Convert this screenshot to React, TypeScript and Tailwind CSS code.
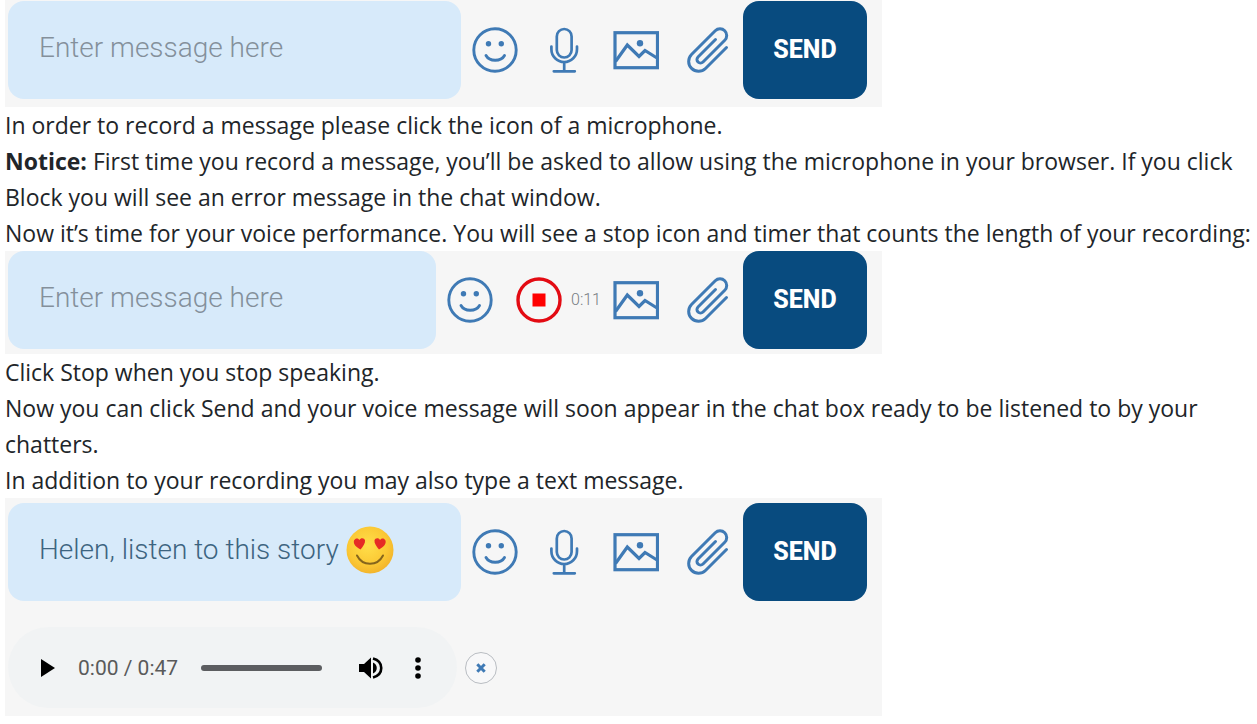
import { useState } from 'react';
import type { ReactNode } from 'react';

function SmileIcon() {
  return (
    <svg viewBox="0 0 46 46" className="size-[46px]" fill="none" stroke="currentColor" strokeWidth="2.9" strokeLinecap="round">
      <circle cx="23" cy="23" r="21.2" />
      <path d="M14 28.500c3.500 6.300 15 6.300 18.500 0" />
      <circle cx="16.500" cy="16.700" r="2.700" fill="currentColor" stroke="none" />
      <circle cx="29.300" cy="16.700" r="2.700" fill="currentColor" stroke="none" />
    </svg>
  );
}

function MicIcon() {
  return (
    <svg viewBox="0 0 46 46" className="size-[46px]" fill="none" stroke="currentColor" strokeWidth="2.7" strokeLinecap="round">
      <rect x="15.800" y="2" width="14.800" height="28.500" rx="7.400" />
      <path d="M10.400 19.500v2.700a12.800 12.800 0 0 0 25.600 0v-2.700M23.200 35v9.300M12.800 44.300h21" />
    </svg>
  );
}

function ImageIcon() {
  return (
    <svg viewBox="0 0 46 46" className="size-[46px]" fill="none" stroke="currentColor" strokeWidth="3.200">
      <rect x="2" y="5.700" width="42.500" height="35" />
      <path d="M2.500 34.500 14.300 18l11.700 11.500L32 23.500l12 7.500" />
      <circle cx="27" cy="16.300" r="3.200" fill="currentColor" stroke="none" />
    </svg>
  );
}

function ClipIcon() {
  return (
    <svg viewBox="0 0 46 46" className="size-[46px]" fill="none" stroke="currentColor" strokeWidth="3" strokeLinecap="round">
      <path d="M41.500 20.500 20.500 41.500A9.900 9.900 0 0 1 6.500 27.500L30.250 3.750a6.700 6.700 0 0 1 9.500 9.500L18 35a3.500 3.500 0 0 1-5-5L30.500 12.500" />
    </svg>
  );
}

function StopIcon() {
  return (
    <svg viewBox="0 0 46 46" className="size-[46px]">
      <circle cx="23" cy="23" r="21" fill="none" stroke="#e30b13" strokeWidth="3.400" />
      <rect x="16.500" y="16.500" width="13" height="13" fill="#ff0000" />
    </svg>
  );
}

function HeartEyes() {
  return (
    <svg viewBox="0 0 48 48" className="size-12 shrink-0" role="img" aria-label="heart eyes">
      <defs>
        <radialGradient id="face" cx="0.45" cy="0.4" r="0.6">
          <stop offset="0" stopColor="#ffdf4a" />
          <stop offset="0.7" stopColor="#fbc834" />
          <stop offset="1" stopColor="#f3b52c" />
        </radialGradient>
      </defs>
      <circle cx="24" cy="24" r="23.500" fill="url(#face)" />
      <path d="M14.500 23.500C10 21 7 18 8 14.500c1.300-2.800 4.500-2.500 5.500-.500 1-2.600 5-2.400 5.500.300.500 3-2 6.200-4.500 9.200Z" fill="#e62b25" />
      <path d="M33 23.500c-2.500-3-5-6.200-4.500-9.200.500-2.700 4.500-2.900 5.500-.300 1-2 4.200-2.300 5.500.500 1 3.500-2 6.500-6.500 9Z" fill="#e62b25" />
      <path d="M11 29.500c5.500 11 20.500 11 26 0" fill="none" stroke="#86651c" strokeWidth="2" strokeLinecap="round" />
    </svg>
  );
}

function IconButton({ label, children }: { label: string; children: ReactNode }) {
  return (
    <button type="button" aria-label={label} className="shrink-0 text-[#3f7ab5]">
      {children}
    </button>
  );
}

interface ComposerProps {
  initial?: string;
  emoji?: boolean;
  timer?: string;
}

function Composer({ initial = '', emoji = false, timer }: ComposerProps) {
  const [message, setMessage] = useState(initial);

  return (
    <form className="flex items-center pl-[3px] pr-[15px]" onSubmit={e => e.preventDefault()}>
      <div className="mr-[11px] flex h-[98px] min-w-0 flex-1 items-center gap-[7px] rounded-2xl bg-[#d7eafa] pb-1 pl-[31px]">
        <input
          type="text"
          aria-label="Message"
          placeholder="Enter message here"
          value={message}
          onChange={e => setMessage(e.target.value)}
          className="[field-sizing:content] min-w-0 bg-transparent text-[28px] leading-9 font-light text-[#3d6480] outline-none placeholder:text-[#84909b]"
        />
        {emoji && <HeartEyes />}
      </div>
      <IconButton label="Emoji"><SmileIcon /></IconButton>
      <div className="ml-[23px] flex items-center">
        {timer ? (
          <>
            <IconButton label="Stop recording"><StopIcon /></IconButton>
            <span className="ml-[9px] mr-[13px] w-[29px] text-base font-light text-[#777c82]">{timer}</span>
          </>
        ) : (
          <div className="mr-[26px] flex">
            <IconButton label="Record"><MicIcon /></IconButton>
          </div>
        )}
      </div>
      <IconButton label="Add image"><ImageIcon /></IconButton>
      <div className="ml-[26px] mr-3 flex">
        <IconButton label="Attach file"><ClipIcon /></IconButton>
      </div>
      <button type="submit" className="h-[98px] w-[124px] shrink-0 rounded-2xl bg-[#084b7f] text-[25px] font-extrabold text-white">
        SEND
      </button>
    </form>
  );
}

function AudioPlayer() {
  return (
    <div className="flex items-center gap-2 pl-[3px]">
      <div className="flex h-[81px] w-[449px] items-center rounded-full bg-[#f1f3f4] pl-[33px]">
        <button type="button" aria-label="Play">
          <svg viewBox="0 0 14 18" className="h-[18px] w-[14px]">
            <path d="M0 0v18L14 9Z" />
          </svg>
        </button>
        <span className="ml-[23px] w-[101px] whitespace-nowrap text-[21px] text-[#5a5a5a]">0:00 / 0:47</span>
        <input
          type="range"
          aria-label="Seek"
          min={0}
          max={47}
          defaultValue={0}
          className="ml-[22px] h-1.5 w-[121px] appearance-none rounded-full bg-[#5c5d60] [&::-webkit-slider-thumb]:size-0 [&::-webkit-slider-thumb]:appearance-none"
        />
        <button type="button" aria-label="Mute" className="ml-[37px]">
          <svg viewBox="0 0 24 24" className="size-6">
            <path d="M0 8v8h5l7 6.500v-21L5 8Z" />
            <path d="M14 6.500v11c5-2 5-9 0-11Z" />
            <path d="M14 2.500c11 3 11 16 0 19" fill="none" stroke="#000" strokeWidth="2.600" />
          </svg>
        </button>
        <button type="button" aria-label="More options" className="ml-8">
          <svg viewBox="0 0 6 22" className="h-[22px] w-1.5">
            <circle cx="3" cy="3" r="2.800" />
            <circle cx="3" cy="11" r="2.800" />
            <circle cx="3" cy="19" r="2.800" />
          </svg>
        </button>
      </div>
      <button
        type="button"
        aria-label="Remove recording"
        className="flex size-8 items-center justify-center rounded-full border border-[#b9bdc2] bg-[#f8f8f9]"
      >
        <svg viewBox="0 0 10 10" className="size-2.5">
          <path d="M1.300 1.300l7.400 7.400M8.700 1.300 1.300 8.700" stroke="#3f7ab5" strokeWidth="3" />
        </svg>
      </button>
    </div>
  );
}

function Panel({ children, className }: { children: ReactNode; className: string }) {
  return <div className={`max-w-[877px] bg-[#f6f6f6] font-[Roboto,sans-serif] ${className}`}>{children}</div>;
}

export default function App() {
  return (
    <main className="bg-white pb-2 pl-[5px] font-['Open_Sans',sans-serif] text-[23px] leading-9 text-[#212529]">
      <Panel className="pt-px pb-2">
        <Composer />
      </Panel>
      <p>In order to record a message please click the icon of a microphone.</p>
      <p>
        <strong>Notice:</strong> First time you record a message, you’ll be asked to allow using the microphone in your browser. If you click Block you will see an error message in the chat window.
      </p>
      <p>Now it’s time for your voice performance. You will see a stop icon and timer that counts the length of your recording:</p>
      <Panel className="pb-[5px]">
        <Composer timer="0:11" />
      </Panel>
      <p>Click Stop when you stop speaking.</p>
      <p>Now you can click Send and your voice message will soon appear in the chat box ready to be listened to by your chatters.</p>
      <p>In addition to your recording you may also type a text message.</p>
      <Panel className="flex flex-col gap-[26px] pt-[5px] pb-2">
        <Composer initial="Helen, listen to this story" emoji />
        <AudioPlayer />
      </Panel>
    </main>
  );
}
